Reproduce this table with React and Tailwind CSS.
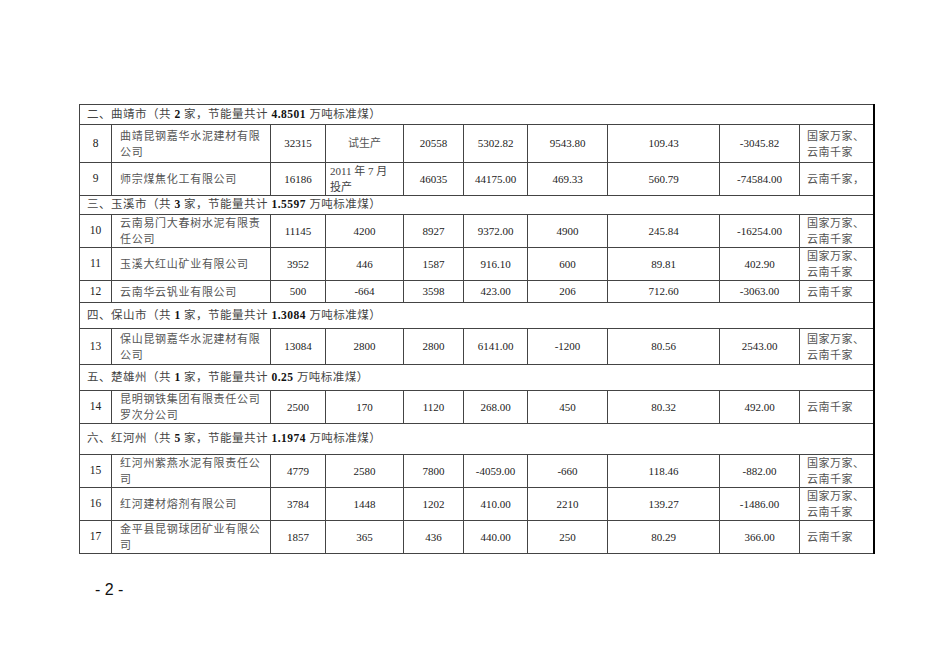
const cols = [32, 159, 55, 78, 60, 64, 80, 112, 80, 74];

const sections = [
  {
    title: "二、曲靖市（共",
    count: "2",
    total: "4.8501",
    h: "h-[20px]",
    rows: [
      { no: "8", name: ["曲靖昆钢嘉华水泥建材有限", "公司"], v: ["32315", "试生产", "20558", "5302.82", "9543.80", "109.43", "-3045.82"], tag: ["国家万家、", "云南千家"], h: "h-[38px]" },
      { no: "9", name: ["师宗煤焦化工有限公司"], v: ["16186", ["2011 年 7 月", "投产"], "46035", "44175.00", "469.33", "560.79", "-74584.00"], tag: ["云南千家，"], h: "h-[32px]" },
    ],
  },
  {
    title: "三、玉溪市（共",
    count: "3",
    total: "1.5597",
    h: "h-[19px]",
    rows: [
      { no: "10", name: ["云南易门大春树水泥有限责", "任公司"], v: ["11145", "4200", "8927", "9372.00", "4900", "245.84", "-16254.00"], tag: ["国家万家、", "云南千家"], h: "h-[33px]" },
      { no: "11", name: ["玉溪大红山矿业有限公司"], v: ["3952", "446", "1587", "916.10", "600", "89.81", "402.90"], tag: ["国家万家、", "云南千家"], h: "h-[32px]" },
      { no: "12", name: ["云南华云钒业有限公司"], v: ["500", "-664", "3598", "423.00", "206", "712.60", "-3063.00"], tag: ["云南千家"], h: "h-[22px]" },
    ],
  },
  {
    title: "四、保山市（共",
    count: "1",
    total: "1.3084",
    h: "h-[26px]",
    rows: [
      { no: "13", name: ["保山昆钢嘉华水泥建材有限", "公司"], v: ["13084", "2800", "2800", "6141.00", "-1200", "80.56", "2543.00"], tag: ["国家万家、", "云南千家"], h: "h-[36px]" },
    ],
  },
  {
    title: "五、楚雄州（共",
    count: "1",
    total: "0.25",
    h: "h-[26px]",
    rows: [
      { no: "14", name: ["昆明钢铁集团有限责任公司", "罗次分公司"], v: ["2500", "170", "1120", "268.00", "450", "80.32", "492.00"], tag: ["云南千家"], h: "h-[33px]" },
    ],
  },
  {
    title: "六、红河州（共",
    count: "5",
    total: "1.1974",
    h: "h-[31px]",
    rows: [
      { no: "15", name: ["红河州紫燕水泥有限责任公", "司"], v: ["4779", "2580", "7800", "-4059.00", "-660", "118.46", "-882.00"], tag: ["国家万家、", "云南千家"], h: "h-[33px]" },
      { no: "16", name: ["红河建材熔剂有限公司"], v: ["3784", "1448", "1202", "410.00", "2210", "139.27", "-1486.00"], tag: ["国家万家、", "云南千家"], h: "h-[32px]" },
      { no: "17", name: ["金平县昆钢球团矿业有限公", "司"], v: ["1857", "365", "436", "440.00", "250", "80.29", "366.00"], tag: ["云南千家"], h: "h-[32px]" },
    ],
  },
];

const cell = "border border-[#444] p-0 align-middle";

function Lines({ lines }) {
  return lines.map((l, i) => (
    <div key={i} className="whitespace-nowrap">
      {l}
    </div>
  ));
}

function DataRow({ row }) {
  return (
    <tr className={row.h}>
      <td className={cell + " text-center text-[11.5px] text-[#222]"}>{row.no}</td>
      <td className={cell + " pl-[8px] text-[11px] leading-[16px] tracking-[0.7px] text-[#555]"}>
        <Lines lines={row.name} />
      </td>
      {row.v.map((v, i) =>
        Array.isArray(v) ? (
          <td key={i} className={cell + " pl-[4px] text-left text-[11px] leading-[16px] text-[#444]"}>
            <Lines lines={v} />
          </td>
        ) : (
          <td key={i} className={cell + " text-center text-[11px] text-[#222]" + (/\d/.test(v) ? "" : " text-[#555]")}>
            {v}
          </td>
        ),
      )}
      <td className={cell + " border-r-2 border-r-black pl-[7px] text-[11px] leading-[16px] tracking-[0.5px] text-[#555]"}>
        <Lines lines={row.tag} />
      </td>
    </tr>
  );
}

function SectionRow({ s }) {
  return (
    <tr className={s.h}>
      <td colSpan={10} className={cell + " border-r-2 border-r-black pl-[7px] text-[11.5px] tracking-[0.5px] whitespace-nowrap text-[#444]"}>
        {s.title} <b className="font-bold text-[#111]">{s.count}</b> 家，节能量共计 <b className="font-bold text-[#111]">{s.total}</b> 万吨标准煤）
      </td>
    </tr>
  );
}

export default function App() {
  return (
    <div className="h-[672px] w-[950px] bg-white pt-[104px] pl-[79px] font-['Liberation_Serif','Noto_Sans_CJK_SC',serif]">
      <table className="w-[794px] table-fixed border-collapse border-t border-t-[#222] border-b border-b-[#222]">
        <colgroup>
          {cols.map((w, i) => (
            <col key={i} style={{ width: w }} />
          ))}
        </colgroup>
        <tbody>
          {sections.map((s) => [
            <SectionRow key={s.title} s={s} />,
            ...s.rows.map((r) => <DataRow key={r.no} row={r} />),
          ])}
        </tbody>
      </table>
      <div className="mt-[24px] pl-[16px] font-['Liberation_Sans',sans-serif] text-[16px] text-[#111]">- 2 -</div>
    </div>
  );
}
